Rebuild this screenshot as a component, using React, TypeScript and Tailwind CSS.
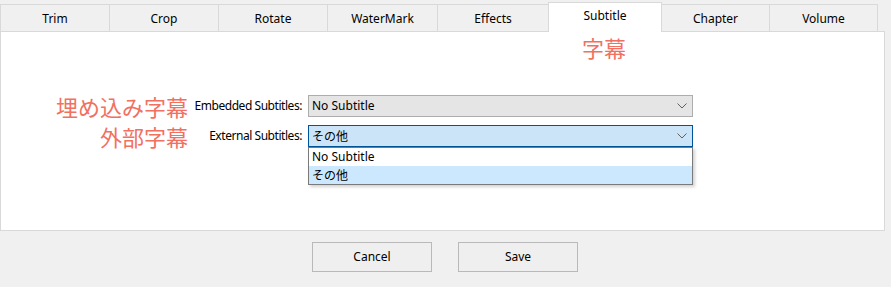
import React from "react";

const tabs = [
  { label: "Trim", w: "w-[109px]", sel: false },
  { label: "Crop", w: "w-[109px]", sel: false },
  { label: "Rotate", w: "w-[109px]", sel: false },
  { label: "WaterMark", w: "w-[110px]", sel: false },
  { label: "Effects", w: "w-[111px]", sel: false },
  { label: "Subtitle", w: "w-[114px]", sel: true },
  { label: "Chapter", w: "w-[108px]", sel: false },
  { label: "Volume", w: "w-[108px]", sel: false },
];

function Chevron() {
  return (
    <svg width="10" height="6" viewBox="0 0 10 6" className="shrink-0">
      <path d="M0.5 0.5 L5 5 L9.5 0.5" fill="none" stroke="#606060" strokeWidth="1" />
    </svg>
  );
}

export default function App() {
  return (
    <div className="w-[891px] h-[287px] bg-[#f0f0f0] overflow-hidden font-['Segoe_UI','Noto_Sans','Noto_Sans_CJK_JP',sans-serif] text-[12px] text-black">
      {/* tab strip */}
      <div className="flex items-end h-[31px]">
        {tabs.map((t, i) => {
          if (t.sel) {
            return (
              <div
                key={t.label}
                className={`${t.w} h-[30px] -mb-px relative z-10 bg-white border-l border-r border-t border-[#d9d9d9] flex items-center justify-center pb-[3px]`}
              >
                {t.label}
              </div>
            );
          }
          const after = i > 5;
          return (
            <div
              key={t.label}
              className={`${t.w} h-[27px] bg-[#f0f0f0] border-t border-[#d9d9d9] ${after ? "border-r" : "border-l"} flex items-center justify-center pt-[1px]`}
            >
              {t.label}
            </div>
          );
        })}
      </div>

      {/* panel */}
      <div className="w-[885px] h-[200px] bg-white border border-[#d9d9d9] flex flex-col">
        <div className="pl-[581px] pt-[2px] h-[28px] text-[22px] leading-[26px] text-[#f2705f] font-['Noto_Sans_CJK_JP',sans-serif]">
          字幕
        </div>
        <div className="mt-[35px] flex flex-col gap-[8px]">
          <div className="flex items-center h-[22px]">
            <div className="w-[187px] shrink-0 text-right text-[22px] leading-[26px] text-[#f2705f] font-['Noto_Sans_CJK_JP',sans-serif] whitespace-nowrap">
              埋め込み字幕
            </div>
            <div className="w-[114px] shrink-0 text-right whitespace-nowrap tracking-[-0.45px]">Embedded Subtitles:</div>
            <div className="ml-[6px] w-[385px] shrink-0 h-[22px] bg-[#e5e5e5] border border-[#adadad] flex items-center justify-between pl-[3px] pr-[5px]">
              <span>No Subtitle</span>
              <Chevron />
            </div>
          </div>
          <div className="flex items-center h-[22px]">
            <div className="w-[187px] shrink-0 text-right text-[22px] leading-[26px] text-[#f2705f] font-['Noto_Sans_CJK_JP',sans-serif] whitespace-nowrap">
              外部字幕
            </div>
            <div className="w-[114px] shrink-0 text-right whitespace-nowrap tracking-[-0.45px]">External Subtitles:</div>
            <div className="ml-[6px] w-[385px] shrink-0 h-[22px] relative">
              <div className="h-[22px] bg-[#cce4f7] border border-[#005499] flex items-center justify-between pl-[3px] pr-[5px]">
                <span className="font-['Noto_Sans_CJK_JP',sans-serif]">その他</span>
                <Chevron />
              </div>
              <div className="absolute left-0 top-[22px] w-[385px] bg-white border border-[#7a7a7a] shadow-[2px_2px_3px_rgba(0,0,0,0.18)] z-20">
                <div className="h-[18px] flex items-center pl-[3px]">No Subtitle</div>
                <div className="h-[18px] flex items-center pl-[3px] bg-[#cce8ff] font-['Noto_Sans_CJK_JP',sans-serif]">その他</div>
              </div>
            </div>
          </div>
        </div>
      </div>

      {/* buttons */}
      <div className="w-[890px] flex justify-center gap-[26px] mt-[11px]">
        <div className="w-[120px] h-[30px] bg-[#efefef] border border-[#b9b9b9] flex items-center justify-center">Cancel</div>
        <div className="w-[120px] h-[30px] bg-[#efefef] border border-[#b9b9b9] flex items-center justify-center">Save</div>
      </div>
    </div>
  );
}
